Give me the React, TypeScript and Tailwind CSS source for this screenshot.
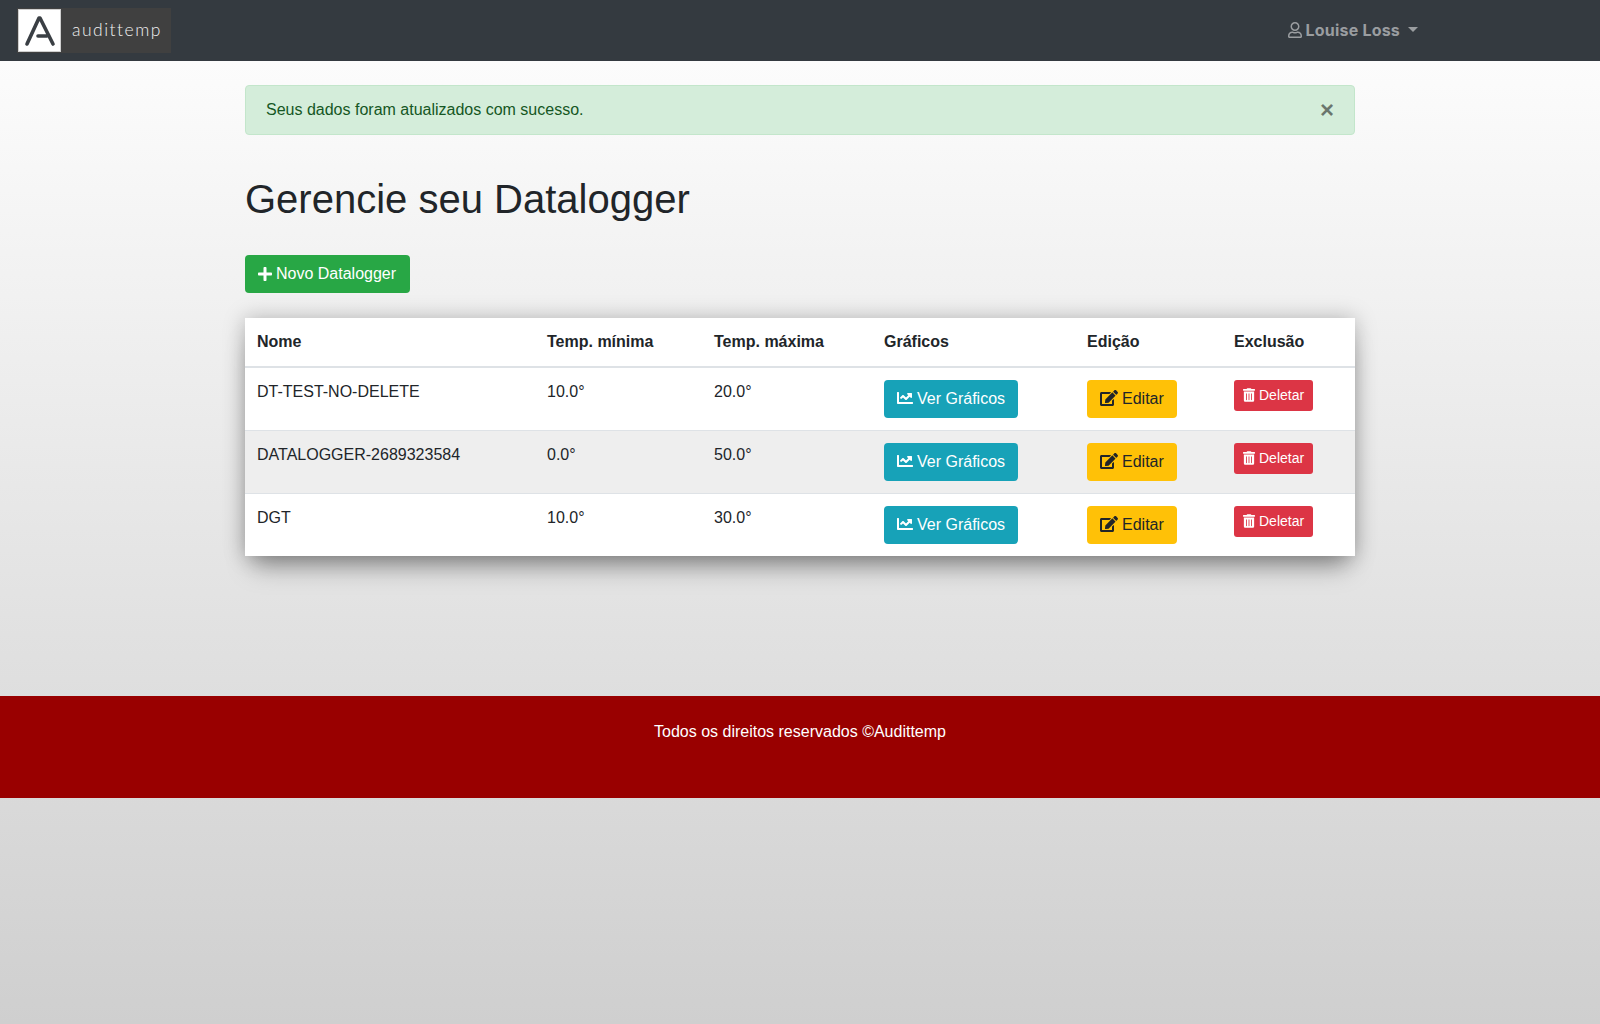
import { FaChartLine, FaEdit, FaPlus, FaRegUser, FaTrashAlt } from "react-icons/fa";

const ROWS = [
  { max: "20.0°", min: "10.0°", name: "DT-TEST-NO-DELETE" },
  { max: "50.0°", min: "0.0°", name: "DATALOGGER-2689323584" },
  { max: "30.0°", min: "10.0°", name: "DGT" },
];

function Logo() {
  return (
    <div className="ml-[-1px] flex h-[45px] w-[154px] items-center bg-[#404040]">
      <div className="ml-px flex h-[43px] w-[43px] items-center justify-center border border-[#cfcfcf] bg-white">
        <svg fill="none" height="41" viewBox="0 0 41 41" width="41">
          <path
            d="M8 34 L20 8 L21 8 L34 34 M19 26 L28 26"
            stroke="#3a3f44"
            strokeLinecap="round"
            strokeLinejoin="round"
            strokeWidth="3.6"
          />
        </svg>
      </div>
      <span className="ml-[11px] font-['Lato'] text-[17.5px] font-light tracking-[1.5px] text-[#f0f0f0]">
        audittemp
      </span>
    </div>
  );
}

export default function App() {
  return (
    <div className="min-h-[1024px] bg-gradient-to-b from-white to-[#cfcfcf] font-['Liberation_Sans',sans-serif] text-base text-[#212529]">
      <nav className="flex h-[61px] items-center justify-between bg-[#343a40] pl-[18px] pr-[182px]">
        <Logo />
        <div className="-mt-0.5 flex items-center text-[#9a9da0]">
          <FaRegUser className="mr-1 h-4 w-[14px]" />
          <span className="font-['Inter'] text-[16px] font-bold tracking-[0.2px]">Louise Loss</span>
          <span className="ml-2 border-x-[5px] border-t-[5px] border-x-transparent border-t-[#9a9da0]" />
        </div>
      </nav>

      <main className="mx-auto w-[1110px] pt-6">
        <div className="flex h-[50px] items-center justify-between rounded border border-[#c3e6cb] bg-[#d4edda] pl-5 pr-5 text-[#155724]">
          <span>Seus dados foram atualizados com sucesso.</span>
          <span className="text-2xl leading-none font-bold text-[#000000]/50">×</span>
        </div>

        <h1 className="mt-10 text-[40px] leading-[48px] font-normal">Gerencie seu Datalogger</h1>

        <button
          className="mt-[32px] flex h-[38px] items-center gap-1 rounded bg-[#28a745] pl-[13px] pr-[14px] text-white"
          type="button"
        >
          <FaPlus className="-mt-px h-4 w-[14px]" />
          Novo Datalogger
        </button>

        <table className="mt-[25px] w-full table-fixed border-collapse bg-white shadow-[0_0_20px_rgba(0,0,0,0.25),0_18px_24px_-8px_rgba(0,0,0,0.35)]">
          <thead>
            <tr className="border-b-2 border-[#dee2e6]">
              <th className="w-[290px] p-3 text-left font-bold">Nome</th>
              <th className="w-[167px] p-3 text-left font-bold">Temp. mínima</th>
              <th className="w-[170px] p-3 text-left font-bold">Temp. máxima</th>
              <th className="w-[203px] p-3 text-left font-bold">Gráficos</th>
              <th className="w-[147px] p-3 text-left font-bold">Edição</th>
              <th className="w-[133px] p-3 text-left font-bold">Exclusão</th>
            </tr>
          </thead>
          <tbody>
            {ROWS.map((row, i) => (
              <tr className={`border-t border-[#dee2e6] ${i === 1 ? "bg-[#eeeeee]" : ""}`} key={row.name}>
                <td className="p-3 align-top">{row.name}</td>
                <td className="p-3 align-top">{row.min}</td>
                <td className="p-3 align-top">{row.max}</td>
                <td className="p-3 align-top">
                  <button
                    className="flex h-[38px] items-center gap-1 rounded bg-[#17a2b8] px-[13px] whitespace-nowrap text-white"
                    type="button"
                  >
                    <FaChartLine className="-mt-[3px] h-4 w-4" />
                    Ver Gráficos
                  </button>
                </td>
                <td className="p-3 align-top">
                  <button
                    className="flex h-[38px] items-center gap-1 rounded bg-[#ffc107] px-[13px] text-[#212529]"
                    type="button"
                  >
                    <FaEdit className="-mt-[2px] h-4 w-[18px]" />
                    Editar
                  </button>
                </td>
                <td className="p-3 align-top">
                  <button
                    className="flex h-[31px] items-center gap-1 rounded-[3px] bg-[#dc3545] px-[9px] pb-0.5 text-sm whitespace-nowrap text-white"
                    type="button"
                  >
                    <FaTrashAlt className="h-[14px] w-3" />
                    Deletar
                  </button>
                </td>
              </tr>
            ))}
          </tbody>
        </table>
      </main>

      <footer className="mt-[140px] h-[102px] bg-[#990000] pt-6 text-center text-white">
        Todos os direitos reservados ©Audittemp
      </footer>
    </div>
  );
}
